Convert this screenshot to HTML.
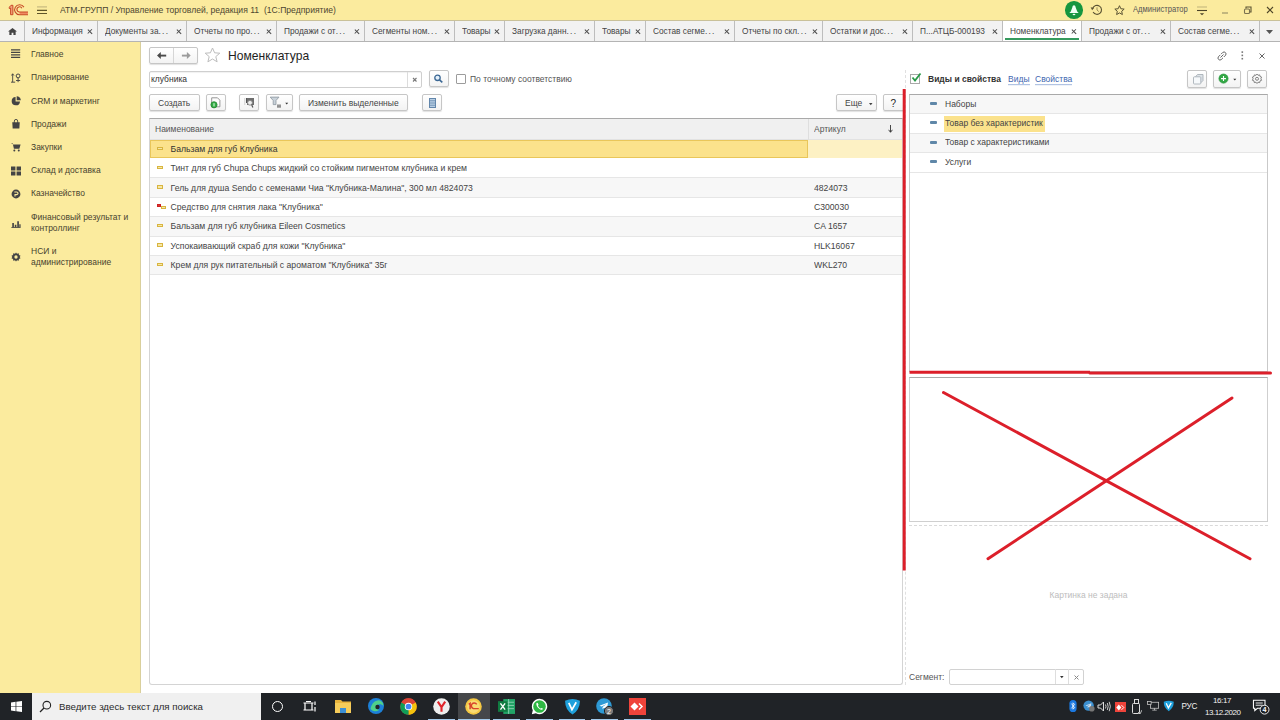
<!DOCTYPE html>
<html><head><meta charset="utf-8">
<style>
*{margin:0;padding:0;box-sizing:border-box}
html,body{width:1280px;height:720px;overflow:hidden;background:#fff;font-family:"Liberation Sans",sans-serif;font-size:8.5px;color:#3a3a3a}
.a{position:absolute}
#hdr{left:0;top:0;width:1280px;height:21px;background:#fbeb9e;border-bottom:1px solid #c9c19a}
#tabs{left:0;top:21px;width:1280px;height:21px;background:#f2f2f2;border-bottom:1px solid #b4b4b4}
.tab{position:absolute;top:0;height:20px;border-right:1px solid #bdbdbd;line-height:20px;white-space:nowrap}
.el{font-weight:normal;letter-spacing:1.3px}
.tab span{position:absolute;left:7px;top:0;color:#444;font-size:8.3px}
.tab i{position:absolute;right:4.7px;top:7.8px;width:4.8px;height:4.8px}.tab i:before,.tab i:after{content:"";position:absolute;left:-.35px;top:1.8px;width:5.5px;height:1.25px;background:#4a4a4a;transform:rotate(45deg)}.tab i:after{transform:rotate(-45deg)}
#side{left:0;top:42px;width:141px;height:651px;background:#fbeb9e;border-right:1px solid #d9cf9c}
.si{position:absolute;left:31px;color:#48432f;line-height:9.5px}
.sic{position:absolute;left:11px;width:10px;height:10px}
.btn{position:absolute;border:1px solid #c6c6c6;border-radius:2px;background:linear-gradient(#fff,#f3f3f3);box-shadow:0 1px 1px rgba(0,0,0,.12)}
.btxt{position:absolute;color:#444;white-space:nowrap}
.row{position:absolute;left:0;width:753px;height:19.4px;border-bottom:1px solid #e6e6e6}
.row .n,.row .c,.trow .t,.tab span,.si,.btxt{transform:scaleY(1.09);transform-origin:0 79%}
.row .n{position:absolute;left:20.6px;top:4.3px;white-space:nowrap;color:#444;font-size:8.65px}
.row .c{position:absolute;left:664px;top:4.3px;white-space:nowrap;color:#444;font-size:8.65px}
.row .ic{position:absolute;left:7px;top:6.8px;width:6px;height:3.5px;background:#f6e7a8;border:1px solid #d8b540}
.trow{position:absolute;left:0;width:357px;height:19.4px;border-bottom:1px solid #e6e6e6}
.trow .ic{position:absolute;left:20px;top:6.8px;width:7px;height:3px;background:#5f87a8;border-radius:1px}
.trow .t{position:absolute;left:35px;top:3.6px;white-space:nowrap;color:#444}
.sy{transform:scaleY(1.09);transform-origin:0 79%}
#task{left:0;top:693px;width:1280px;height:27px;background:#202327}
</style></head><body>
<div id="hdr" class="a">
 <svg class="a" style="left:0;top:0" width="30" height="20" viewBox="0 0 30 20"><path d="M9.3 7.2L11 5.3H12.9V14.7H10.6V8L9.3 8.6Z" fill="#f2a07a" stroke="#c84a26" stroke-width="1"/><rect x="19.5" y="12" width="8.4" height="2.6" fill="#ef8a62"/><path d="M23.9 7.1A5 5 0 1 0 19.5 14.7H28M21.9 8.3A2.6 2.6 0 1 0 19.5 12H28" fill="none" stroke="#c84a26" stroke-width="1.1"/></svg>
 <svg class="a" style="left:37px;top:5px" width="10" height="10"><path d="M0 1.9H10" stroke="#c6b97e" stroke-width="1.2"/><path d="M0 5.4H10M0 8.5H10" stroke="#5e5428" stroke-width="1.1"/></svg>
 <div class="a sy" style="left:60px;top:5px;font-size:8.6px;color:#4d4630">АТМ-ГРУПП / Управление торговлей, редакция 11 &nbsp;(1С:Предприятие)</div>
 <div class="a" style="left:1065.1px;top:1.2px;width:17.5px;height:17.5px;border-radius:50%;background:#16963f"></div>
 <svg class="a" style="left:1068px;top:4px" width="12" height="13" viewBox="0 0 12 13"><path d="M6 1.2C5 1.2 4.6 2 4.3 3.5L2.8 7.6 1.3 8.9H10.7L9.2 7.6 7.7 3.5C7.4 2 7 1.2 6 1.2Z" fill="#effff4"/><ellipse cx="6" cy="10.4" rx="1.4" ry=".75" fill="#effff4"/></svg>
 <svg class="a" style="left:1090px;top:3px" width="14" height="14" viewBox="0 0 14 14"><path d="M2.77 5.31A4.5 4.5 0 1 1 3.1 9.1" fill="none" stroke="#5a5232" stroke-width="1.1"/><path d="M0.6 4.3L4 4.9 2.1 7.3Z" fill="#5a5232"/><path d="M7 4.3V7L8.8 8.6" fill="none" stroke="#9a8f5a" stroke-width="1"/></svg>
 <svg class="a" style="left:1114px;top:4.5px" width="11" height="11" viewBox="0 0 11 11"><path d="M5.50 0.70 L6.85 3.74 L10.16 4.09 L7.69 6.31 L8.38 9.56 L5.50 7.90 L2.62 9.56 L3.31 6.31 L0.84 4.09 L4.15 3.74Z" fill="none" stroke="#5a5232" stroke-width="1" stroke-linejoin="round"/></svg>
 <div class="a sy" style="left:1133px;top:5px;font-size:7.6px;color:#555">Администратор</div>
 <svg class="a" style="left:1196px;top:5px" width="12" height="11"><path d="M1 2H11" stroke="#c9bc80" stroke-width="1.2"/><path d="M1 5.5H11" stroke="#4a4228" stroke-width="1.1"/><path d="M3.8 8.3H8.2L6 10.2Z" fill="#4a4228"/></svg>
 <div class="a" style="left:1222px;top:12px;width:6px;height:1.5px;background:#c2b77e"></div>
 <svg class="a" style="left:1243px;top:6px" width="9" height="9"><path d="M3 2.5V1H8V6H6.5" fill="none" stroke="#5a5232" stroke-width="1.1"/><rect x="1.5" y="3" width="5" height="4.5" rx="1" fill="none" stroke="#7a7250" stroke-width="1.1"/></svg>
 <svg class="a" style="left:1266px;top:6px" width="8" height="8"><path d="M1 1L7 7M7 1L1 7" stroke="#4e4628" stroke-width="1.1"/></svg>
</div>
<div id="tabs" class="a">
 <div class="tab" style="left:0;width:25px"><svg class="a" style="left:7.8px;top:6.5px" width="9" height="7" viewBox="0 0 10 9" preserveAspectRatio="none"><path d="M5 0L10 4.5H8.5V9H6V6H4V9H1.5V4.5H0Z" fill="#444"/></svg></div>
 <div class="tab" style="left:25px;width:73px"><span>Информация</span><i></i></div>
 <div class="tab" style="left:98px;width:89px"><span>Документы за<b class="el">...</b></span><i></i></div>
 <div class="tab" style="left:187px;width:90px"><span>Отчеты по про<b class="el">...</b></span><i></i></div>
 <div class="tab" style="left:277px;width:88px"><span>Продажи с от<b class="el">...</b></span><i></i></div>
 <div class="tab" style="left:365px;width:90px"><span>Сегменты ном<b class="el">...</b></span><i></i></div>
 <div class="tab" style="left:455px;width:50px"><span>Товары</span><i></i></div>
 <div class="tab" style="left:505px;width:90px"><span>Загрузка данн<b class="el">...</b></span><i></i></div>
 <div class="tab" style="left:595px;width:51px"><span>Товары</span><i></i></div>
 <div class="tab" style="left:646px;width:89px"><span>Состав сегме<b class="el">...</b></span><i></i></div>
 <div class="tab" style="left:735px;width:88px"><span>Отчеты по скл<b class="el">...</b></span><i></i></div>
 <div class="tab" style="left:823px;width:90px"><span>Остатки и дос<b class="el">...</b></span><i></i></div>
 <div class="tab" style="left:913px;width:90px"><span>П...АТЦБ-000193</span><i></i></div>
 <div class="tab" style="left:1003px;width:79px;background:#fff"><span>Номенклатура</span><i></i><div class="a" style="left:2px;top:17.3px;width:74px;height:1.6px;background:#359a5e"></div></div>
 <div class="tab" style="left:1082px;width:89px"><span>Продажи с от<b class="el">...</b></span><i></i></div>
 <div class="tab" style="left:1171px;width:89px"><span>Состав сегме<b class="el">...</b></span><i></i></div>
 <svg class="a" style="left:1266px;top:8.5px" width="7" height="4"><path d="M0 0H7L3.5 4Z" fill="#555"/></svg>
</div>
<div id="side" class="a">
 <svg class="sic" style="top:6.9px" viewBox="0 0 12 12"><path d="M0 1H11M0 4H11M0 7H11M0 10H11" stroke="#444" stroke-width="1.3"/></svg>
 <div class="si" style="top:8px">Главное</div>
 <svg class="sic" style="top:30.5px" viewBox="0 0 12 12"><path d="M2 1V11M0.5 3L2 1 3.5 3M0 11H5" fill="none" stroke="#444" stroke-width="1.1"/><circle cx="8.5" cy="3.5" r="2.3" fill="none" stroke="#444" stroke-width="1.2"/><path d="M8.5 6V11M6 9H11" stroke="#444" stroke-width="1.1"/></svg>
 <div class="si" style="top:31.4px">Планирование</div>
 <svg class="sic" style="top:53.5px" viewBox="0 0 12 12"><path d="M5.5 1.2A5 5 0 1 0 10.8 6.5H5.5Z" fill="#444"/><path d="M6.8 0.2A5 5 0 0 1 11.8 5.2H6.8Z" fill="#444"/></svg>
 <div class="si" style="top:54.6px">CRM и маркетинг</div>
 <svg class="sic" style="top:76.9px" viewBox="0 0 12 12"><path d="M1.5 4H10.5L10 11.5H2Z" fill="#444"/><path d="M4 5V2.5A2 2 0 0 1 8 2.5V5" fill="none" stroke="#444" stroke-width="1.1"/></svg>
 <div class="si" style="top:77.8px">Продажи</div>
 <svg class="sic" style="top:100.3px" viewBox="0 0 12 12"><path d="M0 1.5H2L3.5 8H10L11.5 3H2.7Z" fill="#444"/><circle cx="4" cy="10.3" r="1.2" fill="#444"/><circle cx="9.3" cy="10.3" r="1.2" fill="#444"/></svg>
 <div class="si" style="top:101px">Закупки</div>
 <svg class="sic" style="top:123.5px" viewBox="0 0 12 12"><path d="M0 0.5H5.3V5.3H0ZM6.7 0.5H12V5.3H6.7ZM0 6.7H5.3V11.5H0ZM6.7 6.7H12V11.5H6.7Z" fill="#444"/></svg>
 <div class="si" style="top:124.2px">Склад и доставка</div>
 <svg class="sic" style="top:146.9px" viewBox="0 0 12 12"><circle cx="6" cy="6" r="5.3" fill="#444"/><path d="M4 3.5H6.8A1.6 1.6 0 0 1 6.8 6.7H4.8V9" fill="none" stroke="#fbeb9e" stroke-width="1.3"/></svg>
 <div class="si" style="top:147.4px">Казначейство</div>
 <svg class="sic" style="top:175.8px" viewBox="0 0 12 12"><path d="M0.5 11.5H11.5" stroke="#444" stroke-width="1.1"/><path d="M1.5 6H3.5V11H1.5ZM4.5 8H6.5V11H4.5ZM7.5 4H9.5V11H7.5ZM10 7.5H11.5V11H10Z" fill="#444"/></svg>
 <div class="si" style="top:172px">Финансовый результат и<br>контроллинг</div>
 <svg class="sic" style="top:210.2px" viewBox="0 0 12 12"><path d="M6 0.5L7.2 2.2 9.3 1.6 9.5 3.6 11.5 4.4 10.4 6 11.5 7.6 9.5 8.4 9.3 10.4 7.2 9.8 6 11.5 4.8 9.8 2.7 10.4 2.5 8.4 0.5 7.6 1.6 6 0.5 4.4 2.5 3.6 2.7 1.6 4.8 2.2Z" fill="#444"/><circle cx="6" cy="6" r="2" fill="#fbeb9e"/></svg>
 <div class="si" style="top:205.9px">НСИ и<br>администрирование</div>
</div>
<div id="main" class="a" style="left:141px;top:42px;width:1139px;height:651px">
 <div class="btn" style="left:8px;top:5px;width:49px;height:17px"></div>
 <div class="a" style="left:32px;top:6px;width:1px;height:15px;background:#d6d6d6"></div>
 <svg class="a" style="left:15px;top:9px" width="12" height="9" viewBox="0 0 12 9"><path d="M1 4.6L4.8 1.1V8.1Z" fill="#4a4a4a"/><path d="M4 4.6H10.2" stroke="#4a4a4a" stroke-width="1.9"/></svg>
 <svg class="a" style="left:39px;top:9px" width="12" height="9" viewBox="0 0 12 9"><path d="M10.7 4.6L6.9 1.1V8.1Z" fill="#9c9c9c"/><path d="M1.9 4.6H7.7" stroke="#9c9c9c" stroke-width="1.9"/></svg>
 <svg class="a" style="left:63px;top:5px" width="17" height="16" viewBox="0 0 17 16"><path d="M8.5 1L10.6 5.8 15.8 6.2 11.8 9.6 13.1 14.8 8.5 12 3.9 14.8 5.2 9.6 1.2 6.2 6.4 5.8Z" fill="none" stroke="#bdbdbd" stroke-width="1"/></svg>
 <div class="a sy" style="left:87px;top:6.8px;font-size:12.1px;color:#1e1e1e">Номенклатура</div>
 <svg class="a" style="left:1075px;top:7.5px" width="12" height="12" viewBox="0 0 12 12"><path d="M5 4.2L6.8 2.4A2 2 0 0 1 9.6 5.2L7.8 7M4.2 5L2.4 6.8A2 2 0 0 0 5.2 9.6L7 7.8M4.5 7.5L7.5 4.5" fill="none" stroke="#555" stroke-width=".9"/></svg>
 <svg class="a" style="left:1099.5px;top:9px" width="3" height="9"><rect x=".5" y=".3" width="1.6" height="1.6" fill="#777"/><rect x=".5" y="3.6" width="1.6" height="1.6" fill="#777"/><rect x=".5" y="6.9" width="1.6" height="1.6" fill="#777"/></svg>
 <svg class="a" style="left:1118px;top:10.5px" width="6" height="6"><path d="M.5 .5L5.5 5.5M5.5 .5L.5 5.5" stroke="#666" stroke-width="1"/></svg>

 <div class="a" style="left:8px;top:29px;width:273px;height:17px;border:1px solid #cfcfcf;border-radius:2px;box-shadow:inset 0 1px 1px rgba(0,0,0,.06)"></div>
 <div class="a" style="left:266px;top:30px;width:1px;height:15px;background:#dcdcdc"></div>
 <div class="a sy" style="left:10px;top:32px;color:#333">клубника</div>
 <svg class="a" style="left:270.8px;top:35px" width="6" height="6"><path d="M1 1L4.5 4.5M4.5 1L1 4.5" stroke="#777" stroke-width="1.1"/></svg>
 <div class="btn" style="left:288px;top:28.3px;width:19.5px;height:17px"></div>
 <svg class="a" style="left:292px;top:32px" width="11" height="11" viewBox="0 0 11 11"><circle cx="4.5" cy="3.8" r="2.7" fill="#e3f0fb" stroke="#3b6794" stroke-width="1.3"/><path d="M6.5 5.8L9.3 8.3" stroke="#3b6794" stroke-width="1.6"/></svg>
 <div class="a" style="left:315px;top:32.3px;width:9.5px;height:9.5px;border:1px solid #9c9c9c;border-radius:1px;background:#fff"></div>
 <div class="a sy" style="left:329px;top:32px;color:#555">По точному соответствию</div>

 <div class="btn" style="left:8.1px;top:52.1px;width:50.6px;height:17.4px"></div><div class="btxt" style="left:17px;top:56px">Создать</div>
 <div class="btn" style="left:65px;top:52.1px;width:19.5px;height:17.4px"></div>
 <svg class="a" style="left:69px;top:54px" width="12" height="14" viewBox="0 0 12 14"><path d="M1.7 1.8H7.5L9.9 4.2V10.8H1.7Z" fill="#fdfdfd" stroke="#8c8c8c" stroke-width=".9"/><circle cx="4" cy="8.8" r="3.1" fill="#34ab47" stroke="#25882f" stroke-width=".8"/><path d="M4 7.2V10.4" stroke="#e8ffe8" stroke-width="1"/></svg>
 <div class="btn" style="left:98.4px;top:52.1px;width:19.5px;height:17.4px"></div>
 <svg class="a" style="left:102px;top:54px" width="14" height="14" viewBox="0 0 14 14"><rect x="1.3" y="2" width="1" height="7" fill="#cfcfcf"/><rect x="3" y="2" width="1" height="5" fill="#555"/><rect x="4" y="2" width="7" height="7" fill="#6e6e6e"/><circle cx="7" cy="6.8" r="2.4" fill="#eee" stroke="#8a8a8a" stroke-width=".9"/><path d="M8.6 8.6L9.9 11.5" stroke="#555" stroke-width="1.2"/></svg>
 <div class="btn" style="left:124.5px;top:52.1px;width:27.5px;height:17.4px"></div>
 <svg class="a" style="left:128px;top:54px" width="22" height="14" viewBox="0 0 22 14"><path d="M1.2 1.1H10L7 4.5V8.6H4.2V4.5Z" fill="#c9d2da" stroke="#8d979f" stroke-width=".8"/><rect x="8" y="8.1" width="4" height="3.6" fill="#8f8f8f"/><rect x="8" y="8.1" width="4" height="1" fill="#c8c8c8"/><path d="M16.2 6.8H19.2L17.7 8.4Z" fill="#333"/></svg>
 <div class="btn" style="left:158.3px;top:52.1px;width:109.1px;height:17.4px"></div><div class="btxt" style="left:167px;top:56px">Изменить выделенные</div>
 <div class="btn" style="left:281.4px;top:52.1px;width:19.3px;height:17.4px"></div>
 <svg class="a" style="left:287.5px;top:55.5px" width="7" height="10" viewBox="0 0 7 10"><rect x=".5" y=".5" width="6" height="9" fill="#c9dcef" stroke="#6286ab"/><path d="M1 2.3H6M1 4.1H6M1 5.9H6M1 7.7H6" stroke="#6286ab" stroke-width=".8"/></svg>
 <div class="btn" style="left:695.2px;top:52.1px;width:40.4px;height:17.4px"></div><div class="btxt" style="left:704px;top:56px">Еще</div>
 <svg class="a" style="left:727.5px;top:60.5px" width="4" height="3"><path d="M0 0H3.5L1.75 2.2Z" fill="#444"/></svg>
 <div class="btn" style="left:742px;top:52.1px;width:22px;height:17.4px"></div><div class="btxt" style="left:749.5px;top:55.5px;font-size:10px;color:#222">?</div>

 <div class="a" style="left:8px;top:76px;width:754px;height:567px;border:1px solid #d4d4d4;border-top-color:#a9a9a9;border-radius:0 0 3px 3px;overflow:hidden">
  <div class="a" style="left:0;top:0;width:753px;height:21px;background:#f0f0f0;border-bottom:1px solid #e2e2e2"></div>
  <div class="a" style="left:658px;top:0;width:1px;height:21px;background:#dedede"></div>
  <div class="a sy" style="left:5px;top:4.5px;color:#555">Наименование</div>
  <div class="a sy" style="left:664px;top:4.5px;color:#555">Артикул</div>
 <svg class="a" style="left:738px;top:5.5px" width="5" height="8"><path d="M2.5 0V7" stroke="#333" stroke-width=".9"/><path d="M.6 4.8L2.5 7.3 4.4 4.8" fill="none" stroke="#333" stroke-width=".9"/></svg>
  <div class="a" style="left:0;top:21px;width:753px;height:18px;background:#fdf1c4"></div>
  <div class="a" style="left:0;top:21px;width:658px;height:18px;background:#fbe28c;border:1px solid #e9c65a"></div>
  <div class="row" style="top:21px;border:0"><div class="ic"></div><div class="n" style="color:#333">Бальзам для губ Клубника</div></div>
  <div class="row" style="top:39.9px"><div class="ic"></div><div class="n">Тинт для губ Chupa Chups жидкий со стойким пигментом клубника и крем</div></div>
  <div class="row" style="top:59.4px;background:#f7f7f7"><div class="ic"></div><div class="n">Гель для душа Sendo с семенами Чиа "Клубника-Малина", 300 мл 4824073</div><div class="c">4824073</div></div>
  <div class="row" style="top:78.8px"><div class="ic" style="background:#d33;border-color:#c22;width:4px;top:6px"></div><div class="ic" style="left:11px;top:8px;width:5px"></div><div class="n">Средство для снятия лака "Клубника"</div><div class="c">C300030</div></div>
  <div class="row" style="top:98.2px;background:#f7f7f7"><div class="ic"></div><div class="n">Бальзам для губ клубника Eileen Cosmetics</div><div class="c">CA 1657</div></div>
  <div class="row" style="top:117.6px"><div class="ic"></div><div class="n">Успокаивающий скраб для кожи "Клубника"</div><div class="c">HLK16067</div></div>
  <div class="row" style="top:137px;background:#f7f7f7"><div class="ic"></div><div class="n">Крем для рук питательный с ароматом "Клубника" 35г</div><div class="c">WKL270</div></div>
 </div>

 <div class="a" style="left:764px;top:28px;width:1px;height:615px;border-left:1px dashed #e0e0e0"></div>
 <div class="a" style="left:769px;top:32px;width:10px;height:10px;border:1px solid #a9a9a9;background:#fff"></div>
 <svg class="a" style="left:770px;top:30px" width="11" height="11" viewBox="0 0 11 11"><path d="M1.5 5.5L4 8.5 9.5 1.5" fill="none" stroke="#2a9a4a" stroke-width="1.8"/></svg>
 <div class="a sy" style="left:787px;top:32px;font-weight:bold;color:#333">Виды и свойства</div>
 <div class="a sy" style="left:867px;top:33px;color:#3e66b0;border-bottom:1px solid #a9bde0;line-height:9px">Виды</div>
 <div class="a sy" style="left:894px;top:33px;color:#3e66b0;border-bottom:1px solid #a9bde0;line-height:9px">Свойства</div>
 <div class="btn" style="left:1046.3px;top:28.4px;width:19.5px;height:17.3px"></div>
 <svg class="a" style="left:1051px;top:31px" width="12" height="12" viewBox="0 0 12 12"><path d="M3.5 3.8L5.5 1.5H11V7.5L8.8 9.8" fill="#dde3e8" stroke="#a9b1b8" stroke-width=".9"/><rect x="1.5" y="3.8" width="7.3" height="7.2" rx=".8" fill="#f6f9fb" stroke="#a9b1b8" stroke-width=".9"/></svg>
 <div class="btn" style="left:1072.3px;top:28.4px;width:27.4px;height:17.3px"></div>
 <svg class="a" style="left:1077px;top:31px" width="20" height="12" viewBox="0 0 20 12"><circle cx="5.5" cy="5.6" r="4.6" fill="#33a845" stroke="#24903a" stroke-width=".6"/><path d="M5.5 3.1V8.1M3 5.6H8" stroke="#fff" stroke-width="1.1"/><path d="M15.3 5.8H18.3L16.8 7.4Z" fill="#333"/></svg>
 <div class="btn" style="left:1106.3px;top:28.4px;width:19.5px;height:17.3px"></div>
 <svg class="a" style="left:1110px;top:31px" width="12" height="12" viewBox="0 0 12 12"><path d="M6 1L7 2.3 8.7 1.9 9 3.5 10.6 4.1 9.9 5.7 10.6 7.3 9 7.9 8.7 9.6 7 9.2 6 10.5 5 9.2 3.3 9.6 3 7.9 1.4 7.3 2.1 5.7 1.4 4.1 3 3.5 3.3 1.9 5 2.3Z" fill="none" stroke="#777" stroke-width="0.9"/><circle cx="6" cy="5.8" r="1.5" fill="none" stroke="#777" stroke-width=".9"/></svg>

 <div class="a" style="left:768px;top:52px;width:359px;height:278px;border:1px solid #c9c9c9;border-top-color:#a9a9a9">
  <div class="trow" style="top:0;background:#f7f7f7"><div class="ic"></div><div class="t">Наборы</div></div>
  <div class="trow" style="top:19.4px"><div class="ic"></div><div class="a" style="left:34px;top:1.5px;width:101px;height:16px;background:#fbe28c"></div><div class="t">Товар без характеристик</div></div>
  <div class="trow" style="top:38.8px;background:#f7f7f7"><div class="ic"></div><div class="t">Товар с характеристиками</div></div>
  <div class="trow" style="top:58.2px"><div class="ic"></div><div class="t">Услуги</div></div>
 </div>
 <div class="a" style="left:768px;top:335px;width:359px;height:145px;border:1px solid #cfcfcf;border-top-color:#a9a9a9"></div>
 <div class="a" style="left:768px;top:483px;width:359px;height:1px;border-top:1px dashed #dadada"></div>
 <div class="a sy" style="left:768px;top:548px;width:359px;text-align:center;color:#bdbdbd">Картинка не задана</div>
 <div class="a sy" style="left:768px;top:630px;color:#555">Сегмент:</div>
 <div class="a" style="left:807.5px;top:626.7px;width:135px;height:16.5px;border:1px solid #d2d2d2;border-radius:2px"></div>
 <div class="a" style="left:914px;top:627px;width:1px;height:15px;background:#dedede"></div>
 <div class="a" style="left:927px;top:627px;width:1px;height:15px;background:#dedede"></div>
 <svg class="a" style="left:919px;top:633.5px" width="4" height="3"><path d="M0 0H3.6L1.8 2.2Z" fill="#333"/></svg>
 <svg class="a" style="left:932.5px;top:632.5px" width="5" height="5"><path d="M.5 .5L4.5 4.5M4.5 .5L.5 4.5" stroke="#888" stroke-width="1"/></svg>
</div>
<svg class="a" style="left:0;top:0" width="1280" height="720">
 <g stroke="#dc1f2a" stroke-width="3" stroke-linecap="round" fill="none">
  <path d="M904.2 89V570.5" stroke-linecap="butt"/>
  <path d="M909.5 372.3H1090" stroke-linecap="butt"/><path d="M1090 372.9H1270.5"/>
  <path d="M943.5 392.5L1250 558.7"/>
  <path d="M988 558.7L1232 398"/>
 </g>
</svg>
<div id="task" class="a">
 <svg class="a" style="left:10.5px;top:8px" width="11" height="11" viewBox="0 0 12 12"><path d="M0 1.6L5 .9V5.6H0ZM5.8 .8L12 0V5.6H5.8ZM0 6.4H5V11.1L0 10.4ZM5.8 6.4H12V12L5.8 11.2Z" fill="#fff"/></svg>
 <div class="a" style="left:32px;top:0;width:229px;height:27px;background:#f0f0f0"></div>
 <svg class="a" style="left:39px;top:7px" width="13" height="13" viewBox="0 0 13 13"><circle cx="7.8" cy="5.2" r="3.8" fill="none" stroke="#222" stroke-width="1.1"/><path d="M5 8L1 12" stroke="#222" stroke-width="1.2"/></svg>
 <div class="a" style="left:59px;top:8px;font-size:9.7px;color:#2b2b2b">Введите здесь текст для поиска</div>
 <div class="a" style="left:272px;top:8px;width:11px;height:11px;border:1.5px solid #fff;border-radius:50%"></div>
 <svg class="a" style="left:303px;top:8px" width="13" height="11" viewBox="0 0 13 11"><path d="M0.5 2H10.5M0.5 9H10.5M2 2V9M9 2V9" stroke="#fff" stroke-width="1.2"/><path d="M12 0.5V4M12 6V10.5" stroke="#fff" stroke-width="1.2"/><path d="M3 .5H8" stroke="#fff" stroke-width="1"/></svg>
 <svg class="a" style="left:335px;top:6px" width="16" height="14" viewBox="0 0 16 14"><path d="M0 1H6L7.5 2.5H16V14H0Z" fill="#e8b33c"/><rect x="0" y="4" width="16" height="10" fill="#f6cc5a"/><rect x="5" y="9" width="6" height="5" fill="#3c8fd6"/></svg>
 <svg class="a" style="left:368px;top:5px" width="16" height="16" viewBox="0 0 16 16"><circle cx="8" cy="8" r="8" fill="#1c80d8"/><path d="M8 3A5 5 0 0 1 15.5 8C14 6 11 5.5 9 7C7.5 8.5 8 11 11 12A6 6 0 0 1 2.5 11C3.5 6 6 3.5 8 3Z" fill="#4fd08a"/><circle cx="9.5" cy="9" r="2.2" fill="#202327"/></svg>
 <svg class="a" style="left:400px;top:5px" width="17" height="17" viewBox="0 0 16 16"><circle cx="8" cy="8" r="7.8" fill="#db4437"/><path d="M8 8L1.2 4.2A7.8 7.8 0 0 1 14.8 4.2Z" fill="#db4437"/><path d="M8 8L14.8 4.2A7.8 7.8 0 0 1 8 15.8Z" fill="#f4c20d"/><path d="M8 8L8 15.8A7.8 7.8 0 0 1 1.2 4.2Z" fill="#0f9d58"/><circle cx="8" cy="8" r="3.5" fill="#fff"/><circle cx="8" cy="8" r="2.7" fill="#4285f4"/></svg>
 <svg class="a" style="left:433px;top:5px" width="17" height="17" viewBox="0 0 16 16"><circle cx="8" cy="8" r="7.8" fill="#eee"/><path d="M4.5 3.5L8 8.5 11.5 3.5M8 8.5V13" fill="none" stroke="#e0242a" stroke-width="2"/></svg>
 <div class="a" style="left:428px;top:25.5px;width:27px;height:1.5px;background:#a3c9ea"></div>
 <div class="a" style="left:458px;top:0;width:32px;height:27px;background:#45474a"></div>
 <svg class="a" style="left:465px;top:5px" width="17" height="17" viewBox="0 0 16 16"><circle cx="8" cy="8" r="7.8" fill="#f5c842"/><circle cx="8" cy="8" r="6" fill="#f9dc73"/><path d="M3.5 6L4.8 5V10.5M11 6A2.7 2.7 0 1 0 8 10H13" fill="none" stroke="#d9432b" stroke-width="1.4"/></svg>
 <div class="a" style="left:458px;top:25.5px;width:32px;height:1.5px;background:#a3c9ea"></div>
 <svg class="a" style="left:498px;top:5px" width="17" height="17" viewBox="0 0 16 16"><rect x="5" y="1" width="11" height="14" fill="#21a366"/><path d="M6 4H15M6 7H15M6 10H15M10 1V15" stroke="#fff" stroke-width=".7" opacity=".6"/><rect x="0" y="3" width="9" height="10" fill="#107c41"/><path d="M2.3 5L6.7 11M6.7 5L2.3 11" stroke="#fff" stroke-width="1.3"/></svg>
 <div class="a" style="left:493px;top:25.5px;width:27px;height:1.5px;background:#a3c9ea"></div>
 <svg class="a" style="left:531px;top:5px" width="17" height="17" viewBox="0 0 16 16"><path d="M8 .8A7.2 7.2 0 0 0 1.7 11.5L.8 15.2 4.6 14.3A7.2 7.2 0 1 0 8 .8Z" fill="#fff"/><circle cx="8" cy="8" r="5.9" fill="#2fb844"/><path d="M5.5 4.5C5 5 4.8 6 5.5 7.5S8 10.5 9.5 11C10.5 11.3 11.2 10.8 11.3 10.2L10 9.3 9.2 9.9C8.3 9.5 6.9 8.2 6.5 7.2L7.1 6.4 6.3 4.8Z" fill="#fff"/></svg>
 <div class="a" style="left:526px;top:25.5px;width:27px;height:1.5px;background:#a3c9ea"></div>
 <svg class="a" style="left:564px;top:5px" width="17" height="17" viewBox="0 0 16 16"><path d="M1 2.5Q8 -.5 15 2.5Q15 11 8 15.5Q1 11 1 2.5Z" fill="#1ea0dc"/><path d="M4.5 4.5L7.5 11 11.5 4" fill="none" stroke="#fff" stroke-width="1.6"/></svg>
 <div class="a" style="left:559px;top:25.5px;width:26px;height:1.5px;background:#a3c9ea"></div>
 <svg class="a" style="left:596px;top:5px" width="18" height="18" viewBox="0 0 18 18"><circle cx="8" cy="8" r="7.8" fill="#2e9ad6"/><path d="M3.5 7.8L12 4.5 10.8 11.8 8 9.8 6.6 11.2V9L10.5 6 5.7 8.6Z" fill="#fff"/><circle cx="13" cy="13" r="4.6" fill="#7a7a7a" stroke="#202327" stroke-width="1"/><text x="13" y="15.6" font-size="7" text-anchor="middle" fill="#fff" font-family="Liberation Sans">2</text></svg>
 <div class="a" style="left:591px;top:25.5px;width:27px;height:1.5px;background:#a3c9ea"></div>
 <div class="a" style="left:629px;top:5px;width:17px;height:17px;background:#ef443b"></div>
 <svg class="a" style="left:630px;top:9px" width="15" height="9" viewBox="0 0 15 9"><path d="M4.5 .5L8.5 4.5 4.5 8.5 .5 4.5Z" fill="#fff"/><path d="M9 1.5L12 4.5 9 7.5" fill="none" stroke="#fff" stroke-width="1.5"/></svg>
 <div class="a" style="left:624px;top:25.5px;width:27px;height:1.5px;background:#a3c9ea"></div>

 <svg class="a" style="left:1068.5px;top:7px" width="8" height="12" viewBox="0 0 9 15"><rect x="0" y="0" width="9" height="15" rx="4.5" fill="#1b78e0"/><path d="M2.5 4.5L6.5 9.5 4.5 11.5V3.5L6.5 5.5 2.5 10.5" fill="none" stroke="#fff" stroke-width="1"/></svg>
 <svg class="a" style="left:1082.5px;top:7px" width="12" height="12" viewBox="0 0 15 15"><circle cx="7" cy="7" r="6.5" fill="#3b8fcf"/><path d="M3 7L10.5 4 9.5 10.5 7 8.8 5.8 10V8L9 5.5 5 7.6Z" fill="#cde"/><circle cx="11" cy="11" r="3.5" fill="#777"/></svg>
 <svg class="a" style="left:1097px;top:8px" width="14" height="11" viewBox="0 0 14 11"><path d="M1 4H3.5L6.5 1V10L3.5 7H1Z" fill="none" stroke="#ddd" stroke-width="1"/><path d="M8.5 3.5Q9.5 5.5 8.5 7.5M10.3 2Q12 5.5 10.3 9M12.2 .8Q14.5 5.5 12.2 10.2" fill="none" stroke="#ddd" stroke-width=".9"/></svg>
 <div class="a" style="left:1115px;top:9px;width:11px;height:10px;background:#ef443b"></div>
 <svg class="a" style="left:1116px;top:10.5px" width="9" height="7" viewBox="0 0 9 7"><path d="M2.8 .5L5.3 3.5 2.8 6.5.3 3.5Z" fill="#fff"/><path d="M5.5 1.2L7.8 3.5 5.5 5.8" fill="none" stroke="#fff" stroke-width="1"/></svg>
 <svg class="a" style="left:1132px;top:6px" width="10" height="15" viewBox="0 0 10 15"><rect x="2.5" y=".5" width="4" height="4" fill="none" stroke="#ddd"/><rect x=".5" y="4.5" width="7" height="10" rx="1" fill="none" stroke="#ddd"/><path d="M6 13L8 15 10 11" fill="none" stroke="#ddd" stroke-width=".8"/></svg>
 <svg class="a" style="left:1147px;top:7px" width="12" height="12" viewBox="0 0 16 13"><rect x="4.5" y="1.5" width="11" height="8" fill="none" stroke="#ccc"/><rect x=".5" y=".5" width="5" height="4" fill="#202327" stroke="#ccc"/><path d="M7 12H13M10 9.5V12" stroke="#ccc"/></svg>
 <svg class="a" style="left:1162.5px;top:7px" width="11.5" height="11.5" viewBox="0 0 16 16"><path d="M1 2.5Q8 -.5 15 2.5Q15 11 8 15.5Q1 11 1 2.5Z" fill="#1ea0dc"/><path d="M4.5 4.5L7.5 11 11.5 4" fill="none" stroke="#fff" stroke-width="1.8"/></svg>
 <div class="a" style="left:1181.5px;top:8.5px;font-size:8.2px;letter-spacing:-.3px;color:#f2f2f2">РУС</div>
 <div class="a" style="left:1213px;top:3px;font-size:8px;letter-spacing:-.4px;color:#f2f2f2">16:17</div>
 <div class="a" style="left:1205px;top:14.5px;font-size:8px;letter-spacing:-.45px;color:#f2f2f2">13.12.2020</div>
 <svg class="a" style="left:1251.5px;top:6px" width="18" height="16" viewBox="0 0 20 18"><path d="M1.5 1.5H14.5V10.5H6L3 13V10.5H1.5Z" fill="none" stroke="#fff" stroke-width="1.2"/><path d="M4 4.5H12M4 7H12" stroke="#fff" stroke-width="1"/><circle cx="14" cy="12" r="5" fill="#202327" stroke="#fff" stroke-width="1"/><text x="14" y="15" font-size="8" font-weight="bold" text-anchor="middle" fill="#fff" font-family="Liberation Sans">4</text></svg>
</div>
</body></html>
